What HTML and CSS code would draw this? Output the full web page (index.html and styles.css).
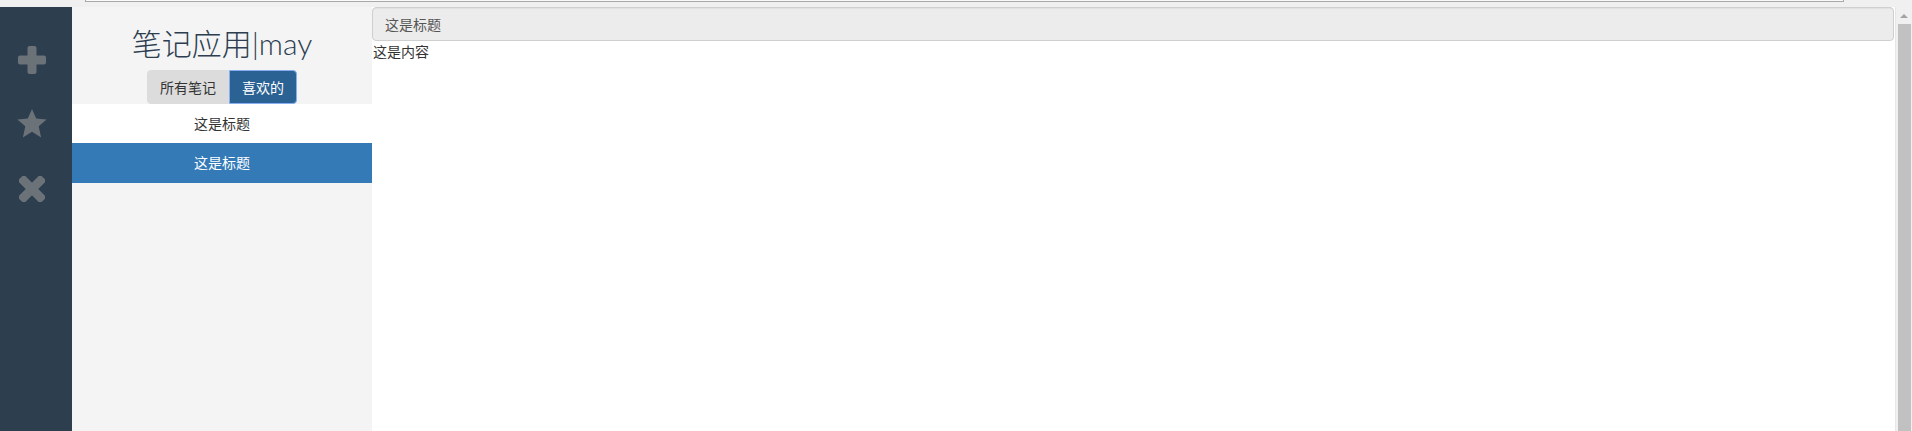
FILE: index.html
```html
<!DOCTYPE html>
<html lang="zh">
<head>
<meta charset="utf-8">
<title>笔记应用</title>
<link rel="stylesheet" href="styles.css">
</head>
<body>
<div class="topbar"><div class="urlbox"></div></div>
<div class="app">
  <nav class="sidebar">
    <a class="tool tool-add" title="新建">
      <svg width="28" height="28" viewBox="0 0 28 28"><rect x="9.5" y="0" width="9" height="28" rx="2"/><rect x="0" y="9.5" width="28" height="9" rx="2"/></svg>
    </a>
    <a class="tool tool-fav" title="喜欢">
      <svg width="30" height="29" viewBox="0 0 30 29"><polygon points="15,0 19.2,9.6 29.6,10.4 21.7,17.2 24.1,28.6 15,22.8 5.9,28.6 8.3,17.2 0.4,10.4 10.8,9.6"/></svg>
    </a>
    <a class="tool tool-del" title="删除">
      <svg width="26" height="26" viewBox="0 0 26 26"><rect x="8.5" y="-3" width="9" height="32" rx="2" transform="rotate(45 13 13)"/><rect x="8.5" y="-3" width="9" height="32" rx="2" transform="rotate(-45 13 13)"/></svg>
    </a>
  </nav>
  <section class="notes">
    <h2 class="app-title">笔记应用|may</h2>
    <div class="btn-group">
      <button class="btn btn-default">所有笔记</button>
      <button class="btn btn-active">喜欢的</button>
    </div>
    <ul class="note-list">
      <li class="note-item">这是标题</li>
      <li class="note-item active">这是标题</li>
    </ul>
  </section>
  <main class="editor">
    <div class="title-input">这是标题</div>
    <div class="content">这是内容</div>
  </main>
  <div class="scrollbar">
    <div class="arrow"></div>
    <div class="thumb"></div>
  </div>
</div>
</body>
</html>
```

FILE: styles.css
```css
* { box-sizing: border-box; }
html, body { margin: 0; padding: 0; }
body {
  width: 1912px;
  height: 431px;
  overflow: hidden;
  font-family: "Noto Sans CJK SC", "Lato", sans-serif;
  font-size: 14px;
  color: #333;
  background: #fff;
}
.topbar {
  height: 7px;
  background: #f0f0f0;
}
.urlbox {
  margin-left: 85px;
  width: 1759px;
  height: 2px;
  border: 1px solid #a8a8a8;
  border-top: none;
  background: #fafafa;
}
.app {
  display: flex;
  height: 424px;
}
.sidebar {
  width: 72px;
  flex: none;
  background: #2d3e4f;
  display: flex;
  flex-direction: column;
  align-items: flex-start;
  padding-top: 38px;
  padding-left: 17px;
}
.tool {
  display: flex;
  align-items: center;
  justify-content: center;
  width: 30px;
  height: 30px;
  fill: #6b7278;
}
.tool-fav { margin-top: 33px; }
.tool-del { margin-top: 36px; }
.notes {
  width: 300px;
  flex: none;
  background: #f4f4f4;
  text-align: center;
}
.app-title {
  margin: 20px 0 10px;
  font-family: "Lato", "Noto Sans CJK SC", sans-serif;
  font-weight: 300;
  font-size: 30px;
  line-height: 33px;
  color: #2c3e50;
}
.btn-group {
  display: inline-flex;
  vertical-align: top;
}
.btn {
  font-family: "Noto Sans CJK SC", sans-serif;
  font-size: 14px;
  line-height: 20px;
  height: 34px;
  padding: 6px 12px;
  border: 1px solid transparent;
  margin: 0;
  white-space: nowrap;
  cursor: pointer;
}
.btn-default {
  background: #dcdcdc;
  border-color: #dcdcdc;
  color: #333;
  border-radius: 4px 0 0 4px;
}
.btn-active {
  background: #2a6293;
  border-color: #86aef0;
  color: #fff;
  border-radius: 0 4px 4px 0;
}
.note-list {
  list-style: none;
  margin: 0;
  padding: 0;
}
.note-item {
  height: 39px;
  line-height: 38px;
  background: #fff;
  color: #333;
  font-size: 14px;
}
.note-item.active {
  height: 40px;
  line-height: 38px;
  background: #337ab7;
  color: #fff;
}
.editor {
  flex: 1;
  padding-right: 1px;
  background: #fff;
}
.title-input {
  height: 34px;
  padding: 6px 12px;
  line-height: 20px;
  border: 1px solid #cfcfcf;
  border-radius: 4px;
  background: #ececec;
  color: #555;
  font-size: 14px;
  box-shadow: inset 0 1px 1px rgba(0,0,0,0.05);
}
.content {
  padding: 0 1px;
  line-height: 20px;
  color: #333;
}
.scrollbar {
  width: 17px;
  flex: none;
  background: #f0f0f0;
  border-left: 1px solid #e6e6e6;
  display: flex;
  flex-direction: column;
  align-items: center;
}
.arrow {
  height: 17px;
  flex: none;
  display: flex;
  align-items: center;
  justify-content: center;
  width: 100%;
}
.arrow::before {
  content: "";
  border-left: 4px solid transparent;
  border-right: 4px solid transparent;
  border-bottom: 4px solid #a3a3a3;
}
.thumb {
  flex: 1;
  width: 13px;
  background: #c1c1c1;
  margin-left: 1px;
}
```
